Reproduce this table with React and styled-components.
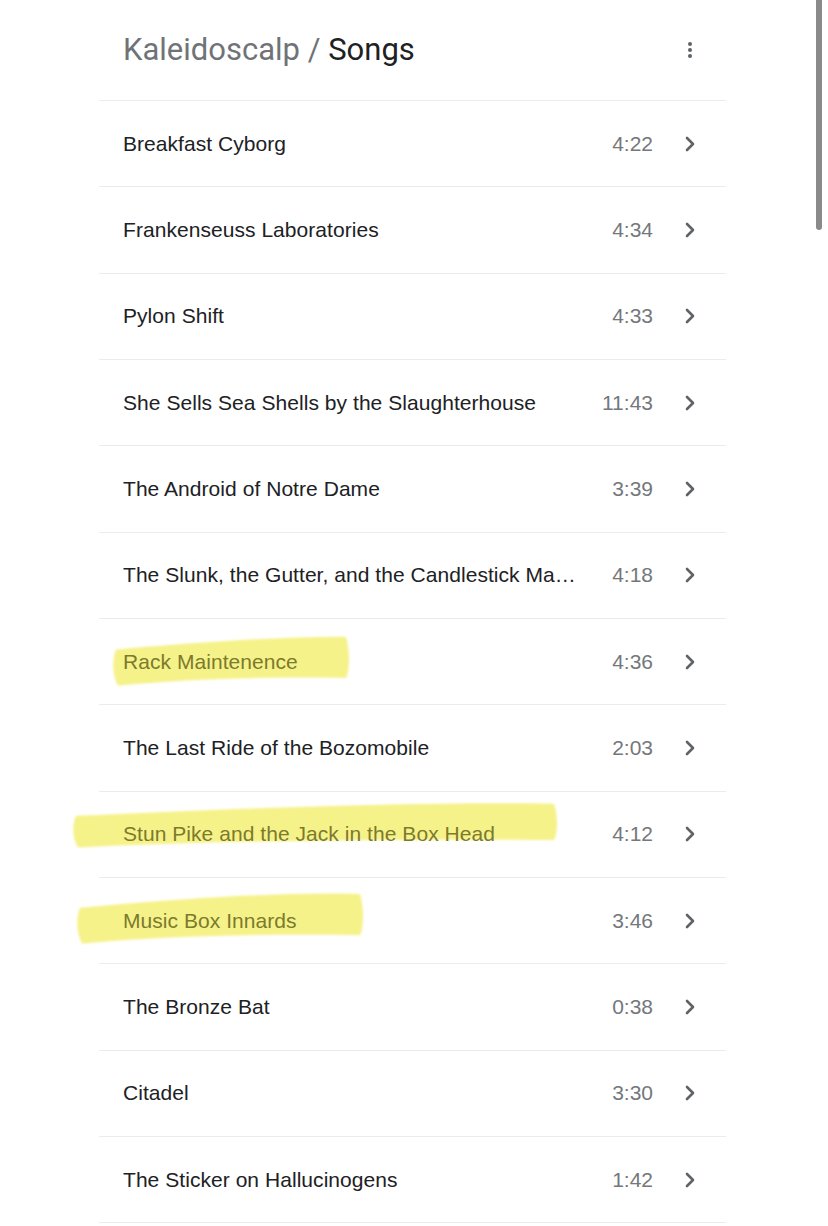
import React from "react";
import styled, { createGlobalStyle } from "styled-components";

const Global = createGlobalStyle`
  html, body { margin: 0; padding: 0; background: #fff; overflow: hidden; }
  body { font-family: "Liberation Sans", Arial, sans-serif; }
`;

const Page = styled.div`
  width: 828px;
  height: 1226px;
  overflow: hidden;
  position: relative;
  display: flex;
  justify-content: flex-start;
`;

const Column = styled.div`
  margin-left: 99px;
  width: 627px;
  display: flex;
  flex-direction: column;
`;

const Header = styled.header`
  height: 100px;
  display: flex;
  align-items: center;
  justify-content: space-between;
  padding: 0 27px 0 24px;
  border-bottom: 1px solid #ececec;
`;

const Title = styled.h1`
  margin: 0;
  font-family: Roboto, "Open Sans", sans-serif;
  font-weight: 400;
  font-size: 31px;
  letter-spacing: 0;
  color: #202124;
  transform: translateY(-1px);
`;

const Crumb = styled.span`
  color: #6f7378;
`;

const MenuButton = styled.button`
  border: 0;
  background: none;
  padding: 0;
  width: 18px;
  height: 18px;
  display: flex;
  align-items: center;
  justify-content: center;
`;

const List = styled.ul`
  list-style: none;
  margin: 0;
  padding: 0;
`;

const Row = styled.li`
  position: relative;
  height: 85.33px;
  border-bottom: 1px solid #ececec;
  display: flex;
  align-items: center;
  padding: 0 30px 0 24px;
`;

const Name = styled.span`
  position: relative;
  z-index: 1;
  flex: 1;
  min-width: 0;
  font-size: 21px;
  letter-spacing: 0.05px;
  color: ${(p) => (p.$marked ? "#7c7a2c" : "#202124")};
  white-space: nowrap;
  overflow: hidden;
  text-overflow: ellipsis;
  padding-right: 8px;
`;

const Time = styled.span`
  width: 64px;
  text-align: right;
  font-size: 21px;
  color: #74777c;
  margin-right: 31px;
`;

const Marker = styled.svg`
  position: absolute;
  pointer-events: none;
  z-index: 0;
  overflow: visible;
`;

const Scrollbar = styled.div`
  position: absolute;
  right: 6px;
  top: 0;
  width: 6px;
  height: 230px;
  border-radius: 0 0 3px 3px;
  background: #8a8a8a;
`;

const songs = [
  ["Breakfast Cyborg", "4:22"],
  ["Frankenseuss Laboratories", "4:34"],
  ["Pylon Shift", "4:33"],
  ["She Sells Sea Shells by the Slaughterhouse", "11:43"],
  ["The Android of Notre Dame", "3:39"],
  ["The Slunk, the Gutter, and the Candlestick Maker", "4:18"],
  ["Rack Maintenence", "4:36", { left: 11, top: 14, width: 242, height: 53, tilt: -3 }],
  ["The Last Ride of the Bozomobile", "2:03"],
  ["Stun Pike and the Jack in the Box Head", "4:12", { left: -29, top: 9, width: 490, height: 46, tilt: -5 }],
  ["Music Box Innards", "3:46", { left: -25, top: 13, width: 292, height: 52, tilt: -6 }],
  ["The Bronze Bat", "0:38"],
  ["Citadel", "3:30"],
  ["The Sticker on Hallucinogens", "1:42"],
];

function Highlight({ left, top, width, height, tilt }) {
  const w = width;
  const h = height;
  const d = `M6 ${h * 0.3 - tilt * 0.2} C ${w * 0.3} ${h * 0.22 + tilt * 0.4}, ${w * 0.7} ${h * 0.12 + tilt}, ${w - 6} ${h * 0.08 + tilt * 0.2}
    C ${w - 2} ${h * 0.3}, ${w - 2} ${h * 0.7}, ${w - 6} ${h * 0.85}
    C ${w * 0.7} ${h * 0.82}, ${w * 0.3} ${h * 0.86}, 8 ${h * 0.98 - tilt * 0.3}
    C 2 ${h * 0.8}, 2 ${h * 0.5}, 6 ${h * 0.3 - tilt * 0.2} Z`;
  return (
    <Marker style={{ left, top }} width={w} height={h} viewBox={`0 0 ${w} ${h}`}>
      <defs>
        <filter id="soft" x="-5%" y="-20%" width="110%" height="140%">
          <feGaussianBlur stdDeviation="1.2" />
        </filter>
      </defs>
      <path d={d} fill="#f6f28a" filter="url(#soft)" />
    </Marker>
  );
}

function Chevron() {
  return (
    <svg width="12" height="16" viewBox="0 0 12 16">
      <path d="M3 2 L9 8 L3 14" fill="none" stroke="#5f6368" strokeWidth="2.6" strokeLinecap="round" strokeLinejoin="round" />
    </svg>
  );
}

function Kebab() {
  return (
    <svg width="6" height="18" viewBox="0 0 6 18">
      <circle cx="3" cy="3" r="2" fill="#5f6368" />
      <circle cx="3" cy="9" r="2" fill="#5f6368" />
      <circle cx="3" cy="15" r="2" fill="#5f6368" />
    </svg>
  );
}

export default function App() {
  return (
    <Page>
      <Global />
      <Column>
        <Header>
          <Title>
            <Crumb>Kaleidoscalp / </Crumb>Songs
          </Title>
          <MenuButton aria-label="More">
            <Kebab />
          </MenuButton>
        </Header>
        <List>
          {songs.map(([name, time, mark]) => (
            <Row key={name}>
              {mark && <Highlight {...mark} />}
              <Name $marked={!!mark}>{name}</Name>
              <Time>{time}</Time>
              <Chevron />
            </Row>
          ))}
        </List>
      </Column>
      <Scrollbar />
    </Page>
  );
}
